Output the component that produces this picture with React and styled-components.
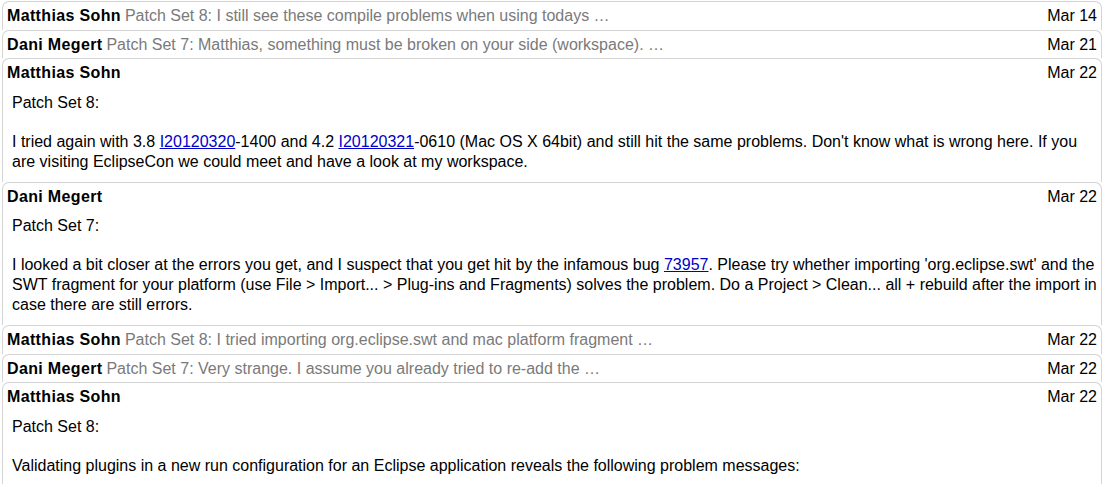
import styled, { createGlobalStyle } from "styled-components";

const GlobalStyle = createGlobalStyle`
  body {
    margin: 0;
    background: #fff;
    font-family: "Liberation Sans", Arial, Helvetica, sans-serif;
    font-size: 16px;
    color: #000;
  }
`;

const Thread = styled.div`
  display: flex;
  flex-direction: column;
  padding: 1px 8px 0 2px;
`;

const Box = styled.div`
  border: 1px solid #d4d4d4;
  border-bottom: none;
  border-radius: 7px 7px 0 0;
  background: #fff;
`;

const Header = styled.div`
  display: flex;
  align-items: baseline;
  gap: 4px;
  padding: 4px 4px 3.5px 4px;
  line-height: 20px;
  white-space: nowrap;
`;

const Author = styled.span`
  font-weight: bold;
  letter-spacing: 0.35px;
  flex: none;
`;

const Summary = styled.span`
  color: #7a7a7a;
  flex: 1;
  overflow: hidden;
`;

const DateLabel = styled.span`
  margin-left: auto;
  flex: none;
`;

const Body = styled.div`
  padding: 6px 2px 10px 9px;
  line-height: 20px;

  p {
    margin: 0;
  }
  p + p {
    margin-top: 19px;
  }
  a {
    color: #0000c8;
    text-decoration: underline;
  }
`;

const comments = [
  {
    author: "Matthias Sohn",
    date: "Mar 14",
    summary: "Patch Set 8: I still see these compile problems when using todays …",
  },
  {
    author: "Dani Megert",
    date: "Mar 21",
    summary: "Patch Set 7: Matthias, something must be broken on your side (workspace). …",
  },
  {
    author: "Matthias Sohn",
    date: "Mar 22",
    body: [
      "Patch Set 8:",
      <>
        I tried again with 3.8 <a href="#">I20120320</a>-1400 and 4.2{" "}
        <a href="#">I20120321</a>-0610 (Mac OS X 64bit) and still hit the same
        problems. Don't know what is wrong here. If you are visiting EclipseCon
        we could meet and have a look at my workspace.
      </>,
    ],
  },
  {
    author: "Dani Megert",
    date: "Mar 22",
    body: [
      "Patch Set 7:",
      <>
        I looked a bit closer at the errors you get, and I suspect that you get
        hit by the infamous bug <a href="#">73957</a>. Please try whether
        importing 'org.eclipse.swt' and the SWT fragment for your platform (use
        File &gt; Import... &gt; Plug-ins and Fragments) solves the problem. Do
        a Project &gt; Clean... all + rebuild after the import in case there
        are still errors.
      </>,
    ],
  },
  {
    author: "Matthias Sohn",
    date: "Mar 22",
    summary: "Patch Set 8: I tried importing org.eclipse.swt and mac platform fragment …",
  },
  {
    author: "Dani Megert",
    date: "Mar 22",
    summary: "Patch Set 7: Very strange. I assume you already tried to re-add the …",
  },
  {
    author: "Matthias Sohn",
    date: "Mar 22",
    body: [
      "Patch Set 8:",
      "Validating plugins in a new run configuration for an Eclipse application reveals the following problem messages:",
    ],
  },
];

function Comment({ author, date, summary, body }) {
  return (
    <Box>
      <Header>
        <Author>{author}</Author>
        {summary && <Summary>{summary}</Summary>}
        <DateLabel>{date}</DateLabel>
      </Header>
      {body && (
        <Body>
          {body.map((para, i) => (
            <p key={i}>{para}</p>
          ))}
        </Body>
      )}
    </Box>
  );
}

export default function App() {
  return (
    <>
      <GlobalStyle />
      <Thread>
        {comments.map((c, i) => (
          <Comment key={i} {...c} />
        ))}
      </Thread>
    </>
  );
}
